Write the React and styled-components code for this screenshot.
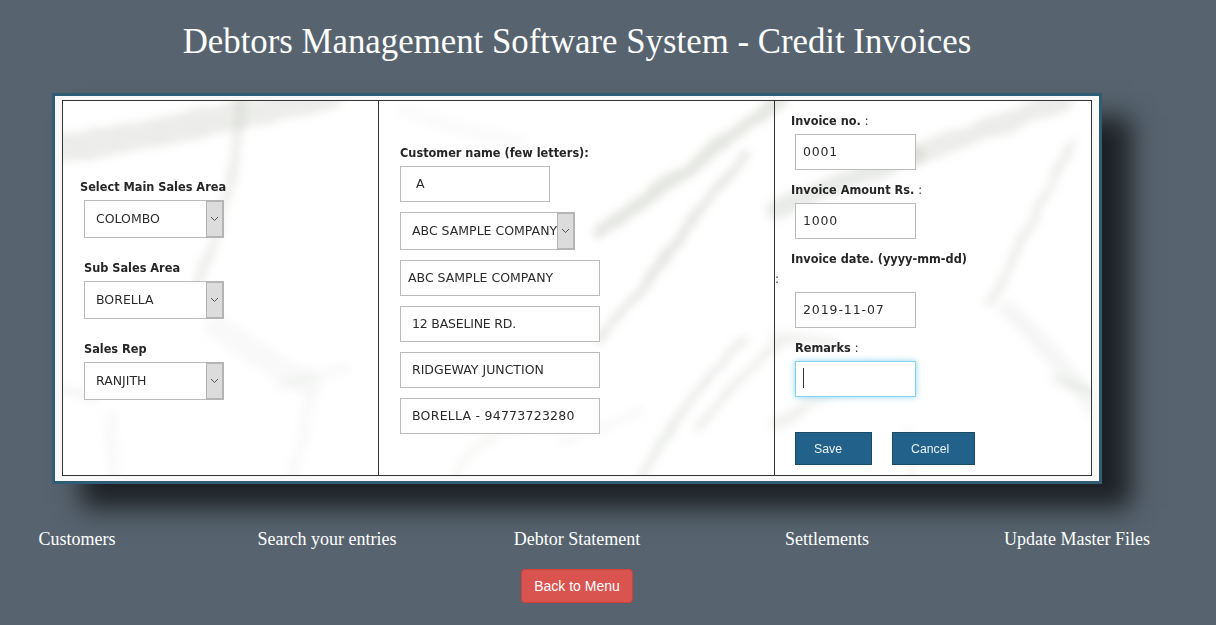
import React from 'react';
import styled, { createGlobalStyle } from 'styled-components';

const GlobalStyle = createGlobalStyle`
  html, body {
    margin: 0;
    padding: 0;
    height: 100%;
    overflow: hidden;
    background: #57646f;
  }
`;

const Page = styled.div`
  width: 1154px;
  height: 625px;
  display: flex;
  flex-direction: column;
  align-items: center;
`;

const Title = styled.h1`
  height: 93px;
  margin: 0;
  padding-top: 21px;
  box-sizing: border-box;
  font-family: "Liberation Serif", serif;
  font-size: 34.8px;
  line-height: 42px;
  font-weight: 400;
  color: #fff;
  white-space: nowrap;
`;

const Panel = styled.div`
  width: 1050px;
  height: 391px;
  box-sizing: border-box;
  padding: 4px 7px 5px;
  background: #f8f8f8;
  border: 3px solid #2f5d76;
  box-shadow: 29px 24px 25px #1c2125;
`;

const Table = styled.div`
  position: relative;
  height: 100%;
  box-sizing: border-box;
  display: grid;
  grid-template-columns: 316px 396px 1fr;
  background: #fff;
  border: 1px solid #333;
`;

const Marble = styled.svg`
  position: absolute;
  inset: 0;
  width: 100%;
  height: 100%;
`;

const Cell = styled.div`
  position: relative;
  box-sizing: border-box;
  display: flex;
  flex-direction: column;
  align-items: flex-start;
  padding: ${(p) => p.$top}px 0 0 ${(p) => p.$left}px;
  border-right: ${(p) => (p.$last ? 'none' : '1px solid #333')};
`;

const Label = styled.label`
  display: block;
  height: 14px;
  margin-left: ${(p) => p.$indent || 0}px;
  margin-top: ${(p) => p.$top || 0}px;
  font-family: "DejaVu Sans", sans-serif;
  font-stretch: condensed;
  font-size: 12.6px;
  line-height: 16px;
  font-weight: 700;
  color: #262626;
  white-space: nowrap;
`;

const LabelTail = styled.span`
  font-weight: 400;
`;

const Colon = styled.span`
  height: 14px;
  margin-top: 7px;
  margin-left: -16px;
  font-family: "DejaVu Sans", sans-serif;
  font-size: 12px;
  line-height: 14px;
  color: #333;
`;

const Input = styled.input`
  display: block;
  width: ${(p) => p.$width}px;
  height: 36px;
  box-sizing: border-box;
  margin-left: ${(p) => p.$indent || 0}px;
  margin-top: ${(p) => p.$top || 0}px;
  padding: 0 0 2px ${(p) => p.$textLeft}px;
  background: #fff;
  border: 1px solid #bbb;
  border-radius: 0;
  outline: none;
  font-family: "DejaVu Sans", sans-serif;
  font-size: 12.5px;
  letter-spacing: ${(p) => p.$spacing || 0}px;
  color: #2b2b2b;
`;

const SelectBox = styled.div`
  width: ${(p) => p.$width}px;
  height: 38px;
  box-sizing: border-box;
  margin-left: ${(p) => p.$indent || 0}px;
  margin-top: ${(p) => p.$top || 0}px;
  display: flex;
  align-items: stretch;
  background: #fff;
  border: 1px solid #bbb;
`;

const SelectValue = styled.div`
  flex: 1;
  min-width: 0;
  padding-left: 11px;
  font-family: "DejaVu Sans", sans-serif;
  font-size: 12.5px;
  line-height: 36px;
  color: #2b2b2b;
  white-space: nowrap;
  overflow: hidden;
`;

const SelectArrow = styled.div`
  width: 18px;
  flex: none;
  box-sizing: border-box;
  display: flex;
  align-items: center;
  justify-content: center;
  margin: -1px -1px -1px 0;
  background: #dcdcdc;
  border: 2px solid #b4b4b4;
  border-left-width: 1px;
`;

const CaretWrap = styled.div`
  position: relative;
  margin-left: 4px;
  margin-top: 7px;
`;

const FocusInput = styled(Input)`
  caret-color: transparent;
  border-color: #86d4ec;
  box-shadow: 0 0 6px rgba(102, 200, 233, 0.75);
`;

const Caret = styled.span`
  position: absolute;
  left: 8px;
  top: 7px;
  width: 1px;
  height: 20px;
  background: #333;
`;

const ButtonRow = styled.div`
  display: flex;
  gap: 20px;
  margin-left: 4px;
  margin-top: 35px;
`;

const ActionButton = styled.button`
  width: ${(p) => p.$width}px;
  height: 33px;
  box-sizing: border-box;
  padding: 0 0 0 ${(p) => p.$textLeft}px;
  text-align: left;
  background: #22628a;
  border: 1px solid #1a4a66;
  border-radius: 0;
  font-family: "Liberation Sans", sans-serif;
  font-size: 12.3px;
  color: #e8f0f5;
`;

const Nav = styled.nav`
  width: 1154px;
  height: 85px;
  display: grid;
  grid-template-columns: repeat(5, 250px);
  justify-content: center;
  padding-top: 45px;
  box-sizing: border-box;
`;

const NavLink = styled.a`
  height: 21px;
  text-align: center;
  font-family: "Liberation Serif", serif;
  font-size: 18px;
  line-height: 21px;
  color: #fff;
  white-space: nowrap;
`;

const BackButton = styled.button`
  width: 112px;
  height: 34px;
  padding: 0;
  background: #d9534f;
  border: 1px solid #d43f3a;
  border-radius: 4px;
  font-family: "Liberation Sans", sans-serif;
  font-size: 14px;
  color: #fff;
`;

// marble veins, given in page coordinates: path, width, opacity
const veins = [
  ['M50 150 C120 140 200 125 330 95', 28, 0.3],
  ['M242 95 C238 140 232 200 195 290', 9, 0.28],
  ['M215 325 C250 350 280 370 312 385', 24, 0.1],
  ['M280 385 C300 380 320 375 345 368', 12, 0.09],
  ['M58 390 C70 390 80 394 92 396', 9, 0.18],
  ['M110 415 L112 480', 10, 0.11],
  ['M312 395 C306 420 300 450 292 480', 9, 0.11],
  ['M600 232 C660 190 720 145 780 98', 14, 0.42],
  ['M600 340 C650 280 700 210 745 155', 8, 0.42],
  ['M640 480 C660 440 700 380 745 340', 7, 0.32],
  ['M698 428 C725 395 750 365 778 345', 7, 0.3],
  ['M774 210 C820 190 870 170 915 154', 18, 0.34],
  ['M915 154 C960 140 1010 120 1064 100', 20, 0.3],
  ['M1072 142 C1050 185 1020 245 990 305', 8, 0.28],
  ['M1008 310 C1040 340 1070 375 1095 408', 18, 0.15],
  ['M1056 380 C1070 384 1082 388 1095 392', 9, 0.24],
  ['M774 336 C795 338 815 341 834 344', 11, 0.2],
  ['M776 424 C805 405 840 385 872 370', 11, 0.24],
  ['M910 430 L912 480', 7, 0.14],
  ['M402 110 C450 125 470 135 520 140', 12, 0.06],
  ['M455 480 C465 450 490 430 530 425', 8, 0.14],
  ['M560 440 C590 432 620 420 640 410', 7, 0.12],
];

const Chevron = () => (
  <svg width="9" height="6" viewBox="0 0 9 6" fill="none">
    <path d="M1 1l3.5 3.5L8 1" stroke="#555" strokeWidth="1" />
  </svg>
);

const Select = ({ value, width = 140, indent, top }) => (
  <SelectBox $width={width} $indent={indent} $top={top}>
    <SelectValue>{value}</SelectValue>
    <SelectArrow>
      <Chevron />
    </SelectArrow>
  </SelectBox>
);

const Field = ({ value, width = 200, textLeft = 11, indent, top = 10, spacing }) => (
  <Input
    readOnly
    value={value}
    $width={width}
    $textLeft={textLeft}
    $indent={indent}
    $top={top}
    $spacing={spacing}
  />
);

const App = () => {
  return (
    <Page>
      <GlobalStyle />
      <Title>Debtors Management Software System - Credit Invoices</Title>
      <Panel>
        <Table>
          <Marble viewBox="0 0 1028 374" preserveAspectRatio="none">
            <defs>
              <filter id="soft" x="-10%" y="-10%" width="120%" height="120%">
                <feTurbulence type="fractalNoise" baseFrequency="0.04" numOctaves="2" seed="4" />
                <feDisplacementMap in="SourceGraphic" scale="7" />
                <feGaussianBlur stdDeviation="4" />
              </filter>
            </defs>
            <g
              filter="url(#soft)"
              transform="translate(-63 -101)"
              fill="none"
              stroke="#bfc3bb"
              strokeLinecap="round"
            >
              {veins.map(([d, w, o]) => (
                <path key={d} d={d} strokeWidth={w} opacity={o} />
              ))}
            </g>
          </Marble>

          <Cell $top={78} $left={17}>
            <Label>Select Main Sales Area</Label>
            <Select value="COLOMBO" indent={4} top={7} />
            <Label $indent={4} $top={22}>Sub Sales Area</Label>
            <Select value="BORELLA" indent={4} top={7} />
            <Label $indent={4} $top={22}>Sales Rep</Label>
            <Select value="RANJITH" indent={4} top={7} />
          </Cell>

          <Cell $top={44} $left={21}>
            <Label>Customer name (few letters):</Label>
            <Field value="A" width={150} textLeft={15} top={7} />
            <Select value="ABC SAMPLE COMPANY" width={175} top={10} />
            <Field value="ABC SAMPLE COMPANY" textLeft={7} />
            <Field value="12 BASELINE RD." spacing={-0.2} />
            <Field value="RIDGEWAY JUNCTION" />
            <Field value="BORELLA - 94773723280" spacing={0.25} />
          </Cell>

          <Cell $top={12} $left={16} $last>
            <Label>Invoice no. <LabelTail>:</LabelTail></Label>
            <Field value="0001" width={121} textLeft={7} indent={4} top={7} spacing={0.8} />
            <Label $top={12}>Invoice Amount Rs. <LabelTail>:</LabelTail></Label>
            <Field value="1000" width={121} textLeft={7} indent={4} top={7} spacing={0.8} />
            <Label $top={12}>Invoice date. (yyyy-mm-dd)</Label>
            <Colon>:</Colon>
            <Field value="2019-11-07" width={121} textLeft={7} indent={4} top={6} spacing={0.9} />
            <Label $indent={4} $top={12}>Remarks <LabelTail>:</LabelTail></Label>
            <CaretWrap>
              <FocusInput readOnly value="" $width={121} $textLeft={7} />
              <Caret />
            </CaretWrap>
            <ButtonRow>
              <ActionButton $width={77} $textLeft={18}>Save</ActionButton>
              <ActionButton $width={83} $textLeft={18}>Cancel</ActionButton>
            </ButtonRow>
          </Cell>
        </Table>
      </Panel>
      <Nav>
        <NavLink>Customers</NavLink>
        <NavLink>Search your entries</NavLink>
        <NavLink>Debtor Statement</NavLink>
        <NavLink>Settlements</NavLink>
        <NavLink>Update Master Files</NavLink>
      </Nav>
      <BackButton>Back to Menu</BackButton>
    </Page>
  );
};

export default App;
